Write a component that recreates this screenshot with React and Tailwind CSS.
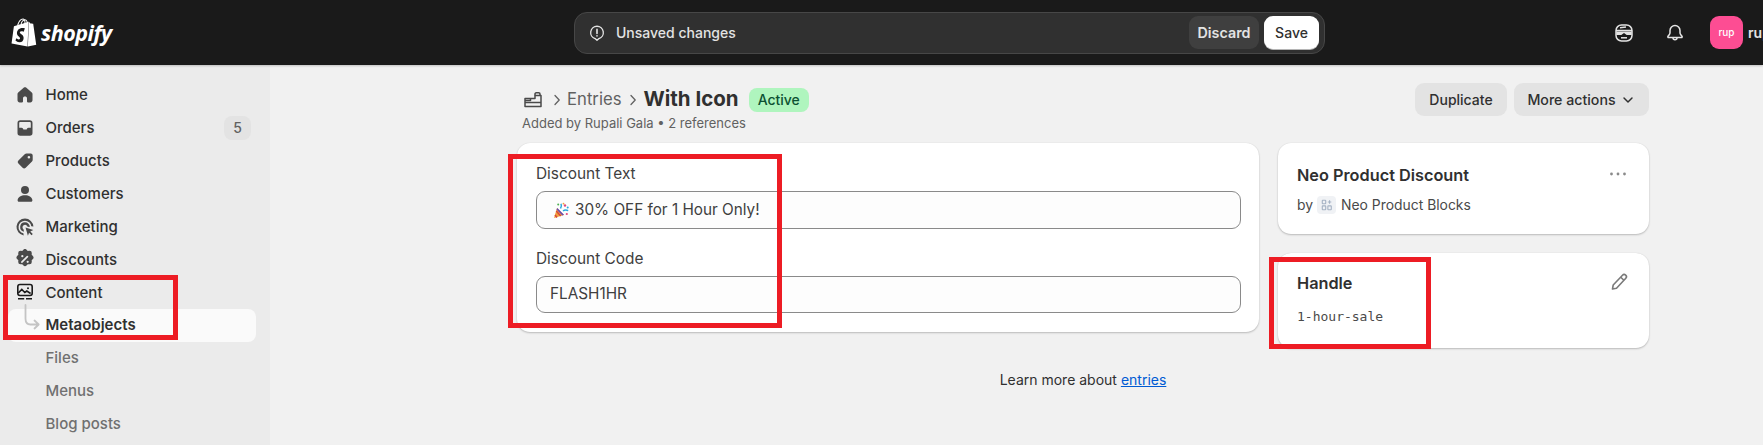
import React from "react";
import { SiShopify } from "react-icons/si";

const Ic = ({ children, className = "" }) => (
  <svg viewBox="0 0 20 20" className={`w-[20px] h-[20px] ${className}`} fill="currentColor">{children}</svg>
);

const HomeI = () => <Ic><path d="M10 2.200c-.4 0-.8.15-1.100.42L3.200 7.600c-.45.4-.7.9-.7 1.500v6.100c0 1.200 1 2.200 2.200 2.200h2.500c.5 0 .8-.4.8-.8v-3.400c0-1 .8-1.700 2-1.700s2 .7 2 1.700v3.400c0 .4.3.8.8.8h2.500c1.200 0 2.200-1 2.200-2.200V9.100c0-.6-.25-1.100-.7-1.500l-5.700-4.980c-.3-.27-.7-.42-1.100-.42z" /></Ic>;
const OrdersI = () => <Ic><path fillRule="evenodd" d="M5.200 2.200A2.700 2.700 0 0 0 2.500 4.900v10.200a2.700 2.700 0 0 0 2.700 2.700h9.600a2.700 2.700 0 0 0 2.700-2.700V4.900a2.700 2.700 0 0 0-2.700-2.700H5.200zM4.200 5c0-.6.45-1.100 1-1.100h9.600c.55 0 1 .5 1 1.100v4.800h-2.300c-.7 0-1.100.3-1.400.8l-.5.9H8.400l-.5-.9c-.3-.5-.7-.8-1.400-.8H4.200V5z" /></Ic>;
const TagI = () => <Ic><path fillRule="evenodd" d="M11.500 2.500h4.300c1 0 1.900.9 1.900 1.900v4.300c0 .7-.3 1.300-.7 1.800l-6.300 6.300a2.200 2.200 0 0 1-3.100 0l-4.200-4.200a2.200 2.200 0 0 1 0-3.100l6.300-6.300c.5-.4 1.100-.7 1.800-.7zm2.400 5.100a1.300 1.300 0 1 0 0-2.600 1.300 1.300 0 0 0 0 2.600z" /></Ic>;
const PersonI = () => <Ic><circle cx="10" cy="6" r="4" /><path d="M10 11.300c-3.900 0-6.900 1.900-7.400 4.700-.1.900.5 1.800 1.400 1.800h12c.9 0 1.500-.9 1.400-1.800-.5-2.800-3.500-4.700-7.400-4.700z" /></Ic>;
const MarketingI = () => (
  <Ic>
    <path d="M10 1.500a8.500 8.500 0 0 0-1.300 16.900l-.3-2.100a6.400 6.400 0 1 1 7.900-7l2.100.3A8.500 8.500 0 0 0 10 1.500z" />
    <path d="M10 5.200a4.800 4.800 0 0 0-1 9.500l-.4-2.200a2.600 2.600 0 1 1 4-2.800l2.200.4A4.800 4.800 0 0 0 10 5.200z" />
    <path d="M10.500 10.500l7.800 2.500-3 1.500 2.500 2.400-1.300 1.300-2.400-2.400-1.200 3z" />
  </Ic>
);
const DiscountI = () => (
  <svg viewBox="1 1 18 18" className="w-[20px] h-[20px]" fill="currentColor">
    <path fillRule="evenodd" d="M8.400 1.800a2.200 2.200 0 0 1 3.200 0l.9.9 1.300-.1a2.200 2.200 0 0 1 2.300 2.300l-.1 1.300.9.900a2.200 2.200 0 0 1 0 3.200l-.9.900.1 1.300a2.200 2.200 0 0 1-2.300 2.300l-1.300-.1-.9.900a2.200 2.200 0 0 1-3.200 0l-.9-.9-1.300.1a2.200 2.200 0 0 1-2.300-2.300l.1-1.300-.9-.9a2.200 2.200 0 0 1 0-3.200l.9-.9-.1-1.300a2.200 2.200 0 0 1 2.300-2.300l1.300.1.900-.9zM7.600 8.500a1 1 0 1 0 0-2 1 1 0 0 0 0 2zm4.800 5a1 1 0 1 0 0-2 1 1 0 0 0 0 2zm.3-6.200a.8.800 0 0 0-1.100 0l-5 5a.8.800 0 0 0 1.100 1.100l5-5a.8.800 0 0 0 0-1.100z" />
  </svg>
);
const ContentI = () => (
  <svg viewBox="0 0 20 20" className="w-[20px] h-[20px]" fill="none" stroke="#1a1a1a" strokeWidth="1.600">
    <rect x="2.800" y="2.500" width="14.400" height="11" rx="2.200" />
    <path d="M3.300 11l3.500-3.500 3 3 2-1.500 3.800 2.500" />
    <circle cx="13" cy="6.300" r="1" fill="#1a1a1a" stroke="none" />
    <path d="M3 16.800h6.200M11 16.800h6" />
  </svg>
);

const Row = ({ icon, label, sub, active, badge }) => (
  <div className={`relative flex items-center h-[32.900px] text-[15px] ${active ? "bg-[#fafafa] rounded-[8px] ml-[8px] mr-[14px] pl-[37.500px] font-semibold text-[#303030]" : sub ? "pl-[45.500px] text-[#707070] font-medium" : "pl-[45.500px] text-[#303030] font-medium"}`}>
    {icon && <span className="absolute left-[15px] top-[6px] text-[#4a4a4a]">{icon}</span>}
    {active && (
      <svg viewBox="0 0 16 26" className="absolute left-[15.500px] top-[-5px] w-[16px] h-[26px]" fill="none" stroke="#c4c4c4" strokeWidth="1.800" strokeLinecap="round" strokeLinejoin="round">
        <path d="M1.500 1v13.500c0 4 1.800 6 5 6H14.500M10.500 16.500l4.200 4-4.200 4" />
      </svg>
    )}
    <span>{label}</span>
    {badge && <span className="absolute right-[19px] top-[4px] w-[27px] h-[24px] rounded-[8px] bg-[#e3e3e3] text-[#616161] text-[14px] flex items-center justify-center">{badge}</span>}
  </div>
);

const Field = ({ label, children, h }) => (
  <div className="flex flex-col">
    <div className="text-[15.400px] leading-[20px] text-[#404040] mb-[7px]">{label}</div>
    <div className={`${h} rounded-[9px] border border-[#8a8a8a] bg-[#fdfdfd] flex items-center px-[13px] text-[15.300px] text-[#404040]`}>{children}</div>
  </div>
);

const Party = () => (
  <svg viewBox="0 0 16 16" className="w-[16px] h-[17px] mr-[6px] ml-[3px]">
    <path d="M1 15.500l3-10 7 7z" fill="#f2a33a" />
    <path d="M2 12.500l2 2.500M3.200 8.500l4.500 5" stroke="#d6453d" strokeWidth="1.400" />
    <path d="M4.300 5.500l6.700 6.700-1.600.8-5.900-5.900z" fill="#6b4bb3" />
    <path d="M7.500 6c1.200-1.500 1.200-3 .5-4.800M10 8.500c1.500-1.200 3.300-1.200 5.200-.4" stroke="#29a8e0" strokeWidth="1.500" fill="none" />
    <circle cx="12" cy="3" r="1.200" fill="#e0467c" /><circle cx="14.700" cy="5" r="1" fill="#29a8e0" /><circle cx="5.200" cy="2" r="1" fill="#4cb050" /><circle cx="13.800" cy="11.500" r="1.100" fill="#e0467c" /><circle cx="10.500" cy="1.200" r=".9" fill="#f2a33a" />
  </svg>
);

const Chevron = ({ className = "" }) => (
  <svg viewBox="0 0 8 12" className={`w-[8px] h-[12px] ${className}`} fill="none" stroke="#616161" strokeWidth="1.300" strokeLinecap="round" strokeLinejoin="round"><path d="M2 1.500L6.200 6 2 10.500" /></svg>
);

const Card = ({ className = "", children }) => (
  <div className={`bg-white rounded-[13px] shadow-[0_1px_2px_rgba(0,0,0,0.22),0_0_1px_rgba(0,0,0,0.12)] ${className}`}>{children}</div>
);

export default function App() {
  return (
    <div className="relative h-[445px] w-full overflow-hidden bg-[#f1f1f1] text-[#303030]" style={{ fontFamily: "Inter, 'Liberation Sans', sans-serif" }}>
      <header className="relative z-10 h-[65px] bg-[#1a1a1a] flex items-center shadow-[0_1px_2px_rgba(0,0,0,0.2)]">
        <div className="w-[574px] shrink-0 flex items-center pl-[10px] text-white">
          <SiShopify className="w-[28px] h-[29px]" />
          <span className="ml-[3px] text-[21.500px] font-bold italic tracking-[-0.5px] leading-none" style={{ fontFamily: "'Open Sans', sans-serif" }}>shopify</span>
        </div>
        <div className="w-[751px] shrink-0 h-[42px] rounded-[13px] bg-[#303030] border border-[#474747] flex items-center pl-[13px] pr-[5px] text-[#e3e3e3]">
          <svg viewBox="0 0 20 20" className="w-[18px] h-[18px]" fill="none" stroke="#e3e3e3" strokeWidth="1.500" strokeLinecap="round">
            <path d="M10 2.500a7 7 0 0 0-2.200 13.650L10 18l2.200-1.850A7 7 0 0 0 10 2.500z" strokeLinejoin="round" />
            <path d="M10 6v4.500M10 13v.3" strokeWidth="1.800" />
          </svg>
          <span className="ml-[10px] text-[14px] font-medium">Unsaved changes</span>
          <div className="ml-auto h-[33px] w-[70px] rounded-[9px] bg-[#3f3f3f] flex items-center justify-center text-[14.300px] font-semibold">Discard</div>
          <div className="ml-[5px] h-[33px] w-[55px] rounded-[9px] bg-white flex items-center justify-center text-[14px] font-medium text-[#303030] shadow-[0_1px_0_#b5b5b5]">Save</div>
        </div>
        <div className="flex items-center shrink-0 ml-[289px] text-[#e3e3e3]">
          <svg viewBox="0 0 20 20" className="w-[20px] h-[20px] shrink-0" fill="none" stroke="#e3e3e3" strokeWidth="1.500">
            <rect x="2" y="2" width="16" height="16" rx="5.500" />
            <path d="M2 7.500h16" />
            <path d="M2.300 8.500h15.400v3.500h-5l-2.700-2-2.700 2h-5z" fill="#e3e3e3" stroke="none" />
            <path d="M6 4.800l6-.8" />
            <path d="M7 14.800h6" />
          </svg>
          <svg viewBox="0 0 20 20" className="ml-[31px] w-[20px] h-[20px] shrink-0" fill="none" stroke="#e3e3e3" strokeWidth="1.500" strokeLinecap="round" strokeLinejoin="round">
            <path d="M10 2.500a5 5 0 0 0-5 5v2.200c0 .8-.3 1.500-.8 2.100L3 13.300c-.4.500-.1 1.200.6 1.200h12.800c.7 0 1-.7.600-1.200l-1.200-1.500c-.5-.6-.8-1.300-.8-2.100V7.500a5 5 0 0 0-5-5z" />
            <path d="M8 14.800a2 2 0 0 0 4 0" />
          </svg>
          <div className="ml-[25px] w-[33px] h-[33px] shrink-0 rounded-[9px] bg-[#fd4d93] flex items-center justify-center text-white text-[10px] font-medium">rup</div>
          <span className="ml-[5px] text-[14px] font-semibold whitespace-nowrap">rup</span>
        </div>
      </header>

      <div className="flex h-[380px]">
        <aside className="w-[270px] shrink-0 bg-[#ebebeb] pt-[14px] overflow-hidden">
          <Row icon={<HomeI />} label="Home" />
          <Row icon={<OrdersI />} label="Orders" badge="5" />
          <Row icon={<TagI />} label="Products" />
          <Row icon={<PersonI />} label="Customers" />
          <Row icon={<MarketingI />} label="Marketing" />
          <Row icon={<DiscountI />} label="Discounts" />
          <Row icon={<ContentI />} label="Content" />
          <Row label="Metaobjects" active />
          <Row label="Files" sub />
          <Row label="Menus" sub />
          <Row label="Blog posts" sub />
        </aside>

        <main className="flex-1 pl-[247px] pr-[114px] pt-[18px]">
          <div className="flex justify-between items-start h-[60px]">
            <div>
              <div className="flex items-center h-[33px]">
                <svg viewBox="0 0 20 20" className="w-[20px] h-[20px] ml-[6px]" fill="none" stroke="#4a4a4a" strokeWidth="1.500" strokeLinejoin="round">
                  <path d="M2 10.500h5.500v-2H2zM2 10.500V16.500H18V5.500H12V8.500H7.500" />
                  <path d="M12 5.500V4c0-.6.500-1.200 1.200-1.200h2.500c.7 0 1.300.6 1.300 1.200v1.500" />
                  <path d="M2 12.500h16" />
                </svg>
                <Chevron className="ml-[10px]" />
                <span className="ml-[6px] text-[16.700px] text-[#616161]">Entries</span>
                <Chevron className="ml-[8px]" />
                <span className="ml-[6px] text-[20.500px] font-bold text-[#303030]">With Icon</span>
                <span className="ml-[10px] h-[24px] px-[9px] rounded-[8px] bg-[#aff5be] text-[#0c5132] text-[14px] font-medium flex items-center">Active</span>
              </div>
              <div className="text-[13px] leading-[16px] text-[#616161] -mt-[1px] ml-[5px]">Added by Rupali Gala • 2 references</div>
            </div>
            <div className="flex items-center gap-[7px]">
              <div className="h-[33px] w-[92px] rounded-[9px] bg-[#e3e3e3] flex items-center justify-center text-[14px] font-medium text-[#303030]">Duplicate</div>
              <div className="h-[33px] w-[135px] rounded-[9px] bg-[#e3e3e3] flex items-center justify-center text-[14.200px] font-medium text-[#303030]">
                More actions
                <svg viewBox="0 0 20 20" className="ml-[4px] w-[16px] h-[16px]" fill="none" stroke="#303030" strokeWidth="1.800" strokeLinecap="round" strokeLinejoin="round"><path d="M5 7.500l5 5 5-5" /></svg>
              </div>
            </div>
          </div>

          <div className="flex gap-[19px]">
            <Card className="w-[742px] h-[189px] pt-[21px] pl-[19px] pr-[18px] flex flex-col gap-[20px]">
              <Field label="Discount Text" h="h-[38px]"><Party /><span>30% OFF for 1 Hour Only!</span></Field>
              <Field label="Discount Code" h="h-[37px]">FLASH1HR</Field>
            </Card>
            <div className="w-[371px] flex flex-col gap-[19px]">
              <Card className="relative h-[91px] pt-[22px] pl-[19px]">
                <div className="text-[16.300px] leading-[20px] font-semibold text-[#303030]">Neo Product Discount</div>
                <div className="mt-[10px] flex items-center text-[13.900px] text-[#4a4a4a]">
                  by
                  <span className="ml-[4px] mr-[5px] w-[19px] h-[18px] rounded-[4px] bg-[#f0f2f5] flex items-center justify-center">
                    <svg viewBox="0 0 14 14" className="w-[12px] h-[12px]" fill="none" stroke="#a6b3c4" strokeWidth="1.300">
                      <rect x="1.500" y="1.500" width="4" height="4" rx=".6" /><rect x="1.500" y="8" width="4" height="4.500" rx=".6" /><rect x="8" y="8" width="4" height="4.500" rx=".6" /><path d="M10 1.500v4M8 3.500h4" />
                    </svg>
                  </span>
                  Neo Product Blocks
                </div>
                <svg viewBox="0 0 20 20" className="absolute right-[21px] top-[21px] w-[20px] h-[20px]" fill="#8a8a8a"><circle cx="3.500" cy="10" r="1.400" /><circle cx="10" cy="10" r="1.400" /><circle cx="16.500" cy="10" r="1.400" /></svg>
              </Card>
              <Card className="relative h-[95px] pt-[20px] pl-[19px]">
                <div className="text-[16.300px] leading-[20px] font-semibold text-[#303030]">Handle</div>
                <div className="mt-[15px] text-[13px] leading-[18px] text-[#4a4a4a]" style={{ fontFamily: "'DejaVu Sans Mono', monospace" }}>1-hour-sale</div>
                <svg viewBox="0 0 20 20" className="absolute right-[20px] top-[19px] w-[20px] h-[20px]" fill="none" stroke="#7a7a7a" strokeWidth="1.600" strokeLinejoin="round">
                  <path d="M13.500 3.200a2.200 2.200 0 0 1 3.300 3L7.500 16.300 3.500 17l.7-4z" />
                  <path d="M11.800 5.300l3.100 3" />
                </svg>
              </Card>
            </div>
          </div>

          <div className="mt-[22px] text-center text-[14px] leading-[20px] text-[#303030]">
            Learn more about <span className="text-[#005bd3] underline">entries</span>
          </div>
        </main>
      </div>

      <div className="absolute left-[3px] top-[275px] w-[175px] h-[65px] border-[5px] border-[#ed1c24] pointer-events-none z-20" />
      <div className="absolute left-[508px] top-[154px] w-[274px] h-[174px] border-[5px] border-[#ed1c24] pointer-events-none z-20" />
      <div className="absolute left-[1269px] top-[257px] w-[162px] h-[92px] border-[5px] border-[#ed1c24] pointer-events-none z-20" />
    </div>
  );
}
